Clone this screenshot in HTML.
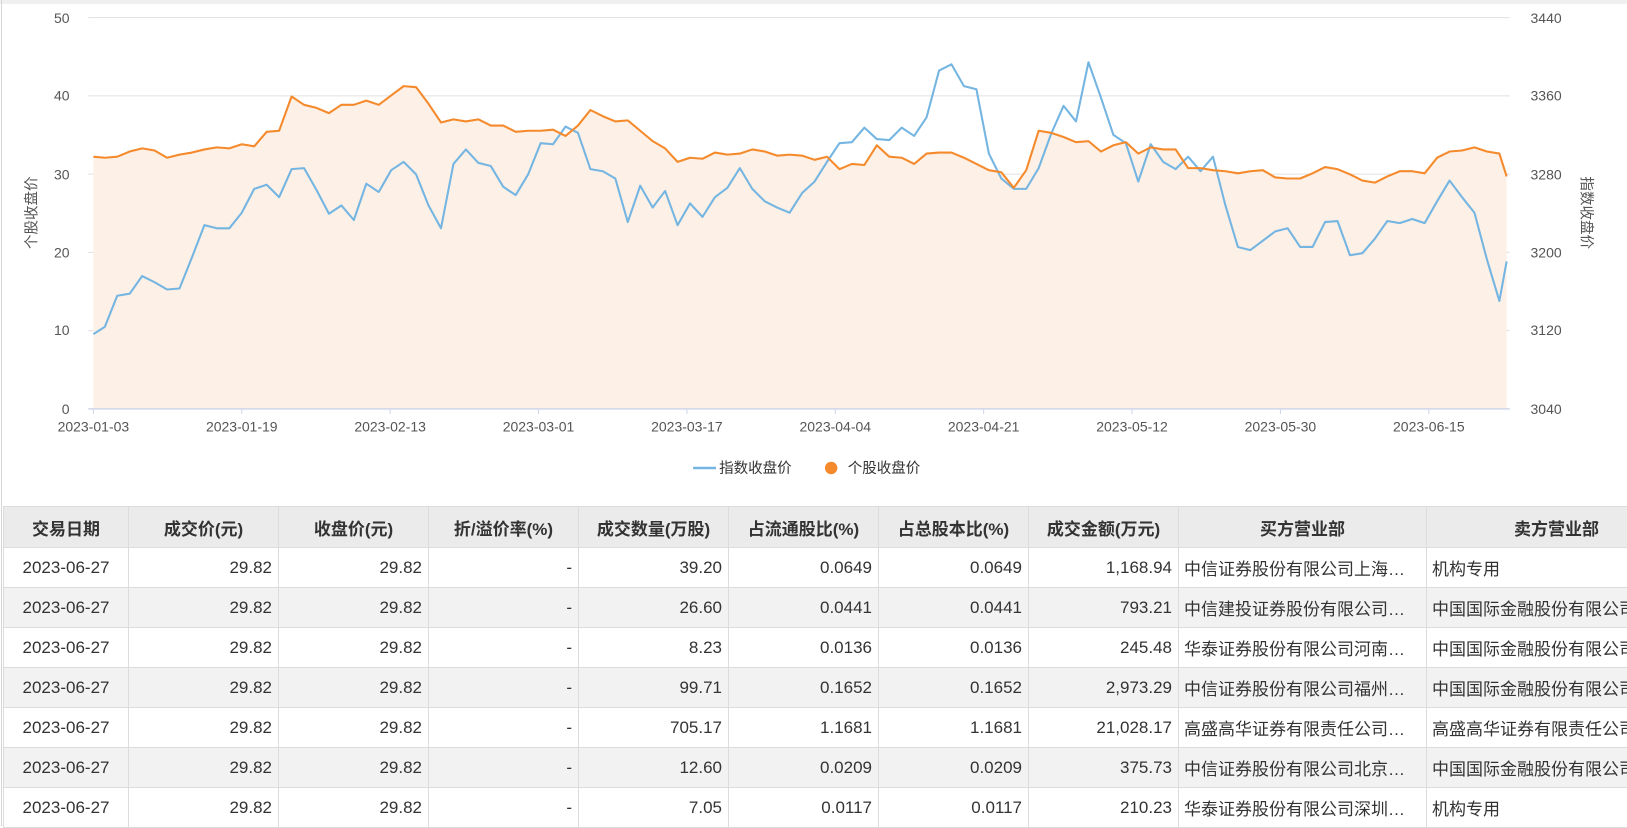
<!DOCTYPE html>
<html><head><meta charset="utf-8">
<style>
html,body{margin:0;padding:0;background:#fff;width:1627px;height:826px;overflow:hidden;font-family:"Liberation Sans","Noto Sans CJK SC",sans-serif;}
.topbar{position:absolute;left:0;top:0;width:1627px;height:4px;background:#f0f0f0;}
.lb{position:absolute;left:1px;top:0;width:1px;height:826px;background:#d6d6d6;}
svg.chart{position:absolute;left:0;top:0;}
table{position:absolute;left:3px;top:506px;width:1683px;border-collapse:collapse;table-layout:fixed;font-size:17px;color:#333;}
td,th{border:1px solid #dcdcdc;height:39px;padding:0 6px;white-space:nowrap;overflow:hidden;}
th{background:#ebebeb;font-weight:bold;text-align:center;height:40px;}
td{text-align:right;}
td.c{text-align:center;}
td.l{text-align:left;padding-left:5px;text-overflow:ellipsis;}
td.l2{text-align:left;padding-left:5px;text-overflow:clip;}
tr.e td{background:#f2f2f2;}
</style></head><body>
<div class="topbar"></div>
<div class="lb"></div>
<svg class="chart" width="1627" height="490" viewBox="0 0 1568 472.2" font-family="Liberation Sans, Noto Sans CJK SC, sans-serif">
<g stroke="#e0e0e0" stroke-width="1">
<line x1="85" y1="17" x2="1455" y2="17"/><line x1="85" y1="92.4" x2="1455" y2="92.4"/>
<line x1="85" y1="167.8" x2="1455" y2="167.8"/><line x1="85" y1="243.2" x2="1455" y2="243.2"/>
<line x1="85" y1="318.6" x2="1455" y2="318.6"/>
</g>
<polygon fill="#fdf0e6" points="90,394 90,151 101,152 113,151 125,146 137,143 149,145 161,152 173,149 185,147 197,144 209,142 221,143 233,139 245,141 257,127 269,126 281,93 293,101 305,104 317,109 329,101 341,101 353,97 365,101 377,92 389,83 401,84 413,100 425,118 437,115 449,117 461,115 473,121 485,121 497,127 509,126 521,126 533,125 545,131 557,121 569,106 581,112 593,117 605,116 617,126 629,136 641,143 653,156 665,152 677,153 689,147 701,149 713,148 725,144 737,146 749,150 761,149 773,150 785,154 797,151 809,163 821,158 833,159 845,140 857,151 869,152 881,158 893,148 905,147 917,147 929,152 941,158 953,164 965,166 977,181 989,164 1001,126 1013,128 1025,132 1037,137 1049,136 1061,146 1073,140 1085,137 1097,148 1109,142 1121,144 1133,144 1145,162 1157,162 1169,164 1181,165 1193,167 1205,165 1217,164 1229,171 1241,172 1253,172 1265,167 1277,161 1289,163 1301,168 1313,174 1325,176 1337,170 1349,165 1361,165 1373,167 1385,152 1397,146 1409,145 1421,142 1433,146 1445,148 1452,170 1452,394"/>
<line x1="85" y1="394" x2="1455" y2="394" stroke="#cfd6e8" stroke-width="1.5"/>
<g stroke="#cfd6e8" stroke-width="1">
<line x1="90" y1="394" x2="90" y2="399"/><line x1="233" y1="394" x2="233" y2="399"/><line x1="376" y1="394" x2="376" y2="399"/><line x1="519" y1="394" x2="519" y2="399"/><line x1="662" y1="394" x2="662" y2="399"/><line x1="805" y1="394" x2="805" y2="399"/><line x1="948" y1="394" x2="948" y2="399"/><line x1="1091" y1="394" x2="1091" y2="399"/><line x1="1234" y1="394" x2="1234" y2="399"/><line x1="1377" y1="394" x2="1377" y2="399"/>
</g>
<polyline fill="none" stroke="#74b5e2" stroke-width="2" stroke-linejoin="round" points="90,322 101,315 113,285 125,283 137,266 149,272 161,279 173,278 185,248 197,217 209,220 221,220 233,205 245,182 257,178 269,190 281,163 293,162 305,183 317,206 329,198 341,212 353,177 365,185 377,164 389,156 401,168 413,198 425,220 437,158 449,144 461,157 473,160 485,180 497,188 509,168 521,138 533,139 545,122 557,128 569,163 581,165 593,172 605,214 617,179 629,200 641,184 653,217 665,196 677,209 689,190 701,181 713,162 725,182 737,194 749,200 761,205 773,186 785,175 797,156 809,138 821,137 833,123 845,134 857,135 869,123 881,131 893,113 905,68 917,62 929,83 941,86 953,148 965,172 977,182 989,182 1001,162 1013,129 1025,102 1037,117 1049,60 1061,94 1073,130 1085,138 1097,175 1109,139 1121,156 1133,163 1145,151 1157,165 1169,151 1181,198 1193,238 1205,241 1217,232 1229,223 1241,220 1253,238 1265,238 1277,214 1289,213 1301,246 1313,244 1325,230 1337,213 1349,215 1361,211 1373,215 1385,194 1397,174 1409,190 1421,205 1433,250 1445,290 1452,252"/>
<polyline fill="none" stroke="#f58a2c" stroke-width="2" stroke-linejoin="round" points="90,151 101,152 113,151 125,146 137,143 149,145 161,152 173,149 185,147 197,144 209,142 221,143 233,139 245,141 257,127 269,126 281,93 293,101 305,104 317,109 329,101 341,101 353,97 365,101 377,92 389,83 401,84 413,100 425,118 437,115 449,117 461,115 473,121 485,121 497,127 509,126 521,126 533,125 545,131 557,121 569,106 581,112 593,117 605,116 617,126 629,136 641,143 653,156 665,152 677,153 689,147 701,149 713,148 725,144 737,146 749,150 761,149 773,150 785,154 797,151 809,163 821,158 833,159 845,140 857,151 869,152 881,158 893,148 905,147 917,147 929,152 941,158 953,164 965,166 977,181 989,164 1001,126 1013,128 1025,132 1037,137 1049,136 1061,146 1073,140 1085,137 1097,148 1109,142 1121,144 1133,144 1145,162 1157,162 1169,164 1181,165 1193,167 1205,165 1217,164 1229,171 1241,172 1253,172 1265,167 1277,161 1289,163 1301,168 1313,174 1325,176 1337,170 1349,165 1361,165 1373,167 1385,152 1397,146 1409,145 1421,142 1433,146 1445,148 1452,170"/>
<g font-size="13.5" fill="#555" text-anchor="end">
<text x="67" y="22">50</text><text x="67" y="97">40</text><text x="67" y="173">30</text><text x="67" y="248">20</text><text x="67" y="323">10</text><text x="67" y="399">0</text>
</g>
<g font-size="13.5" fill="#555" text-anchor="start">
<text x="1475" y="22">3440</text><text x="1475" y="97">3360</text><text x="1475" y="173">3280</text><text x="1475" y="248">3200</text><text x="1475" y="323">3120</text><text x="1475" y="399">3040</text>
</g>
<g font-size="13.5" fill="#555" text-anchor="middle">
<text x="90" y="416">2023-01-03</text><text x="233" y="416">2023-01-19</text><text x="376" y="416">2023-02-13</text><text x="519" y="416">2023-03-01</text><text x="662" y="416">2023-03-17</text><text x="805" y="416">2023-04-04</text><text x="948" y="416">2023-04-21</text><text x="1091" y="416">2023-05-12</text><text x="1234" y="416">2023-05-30</text><text x="1377" y="416">2023-06-15</text>
</g>
<text transform="translate(35,205) rotate(-90)" font-size="14" fill="#555" text-anchor="middle">个股收盘价</text>
<text transform="translate(1524,205) rotate(90)" font-size="14" fill="#555" text-anchor="middle">指数收盘价</text>
<line x1="668" y1="451" x2="690" y2="451" stroke="#74b5e2" stroke-width="2.5"/>
<text x="693" y="456" font-size="14" fill="#333">指数收盘价</text>
<circle cx="801" cy="451" r="6" fill="#f58a2c"/>
<text x="817" y="456" font-size="14" fill="#333">个股收盘价</text>
</svg>
<table>
<colgroup><col style="width:125px"><col style="width:150px"><col style="width:150px"><col style="width:150px"><col style="width:150px"><col style="width:150px"><col style="width:150px"><col style="width:150px"><col style="width:248px"><col style="width:260px"></colgroup>
<tr><th>交易日期</th><th>成交价(元)</th><th>收盘价(元)</th><th>折/溢价率(%)</th><th>成交数量(万股)</th><th>占流通股比(%)</th><th>占总股本比(%)</th><th>成交金额(万元)</th><th>买方营业部</th><th>卖方营业部</th></tr>
<tr><td class="c">2023-06-27</td><td>29.82</td><td>29.82</td><td>-</td><td>39.20</td><td>0.0649</td><td>0.0649</td><td>1,168.94</td><td class="l">中信证券股份有限公司上海…</td><td class="l2">机构专用</td></tr>
<tr class="e"><td class="c">2023-06-27</td><td>29.82</td><td>29.82</td><td>-</td><td>26.60</td><td>0.0441</td><td>0.0441</td><td>793.21</td><td class="l">中信建投证券股份有限公司…</td><td class="l2">中国国际金融股份有限公司</td></tr>
<tr><td class="c">2023-06-27</td><td>29.82</td><td>29.82</td><td>-</td><td>8.23</td><td>0.0136</td><td>0.0136</td><td>245.48</td><td class="l">华泰证券股份有限公司河南…</td><td class="l2">中国国际金融股份有限公司</td></tr>
<tr class="e"><td class="c">2023-06-27</td><td>29.82</td><td>29.82</td><td>-</td><td>99.71</td><td>0.1652</td><td>0.1652</td><td>2,973.29</td><td class="l">中信证券股份有限公司福州…</td><td class="l2">中国国际金融股份有限公司</td></tr>
<tr><td class="c">2023-06-27</td><td>29.82</td><td>29.82</td><td>-</td><td>705.17</td><td>1.1681</td><td>1.1681</td><td>21,028.17</td><td class="l">高盛高华证券有限责任公司…</td><td class="l2">高盛高华证券有限责任公司</td></tr>
<tr class="e"><td class="c">2023-06-27</td><td>29.82</td><td>29.82</td><td>-</td><td>12.60</td><td>0.0209</td><td>0.0209</td><td>375.73</td><td class="l">中信证券股份有限公司北京…</td><td class="l2">中国国际金融股份有限公司</td></tr>
<tr><td class="c">2023-06-27</td><td>29.82</td><td>29.82</td><td>-</td><td>7.05</td><td>0.0117</td><td>0.0117</td><td>210.23</td><td class="l">华泰证券股份有限公司深圳…</td><td class="l2">机构专用</td></tr>
</table>
</body></html>
